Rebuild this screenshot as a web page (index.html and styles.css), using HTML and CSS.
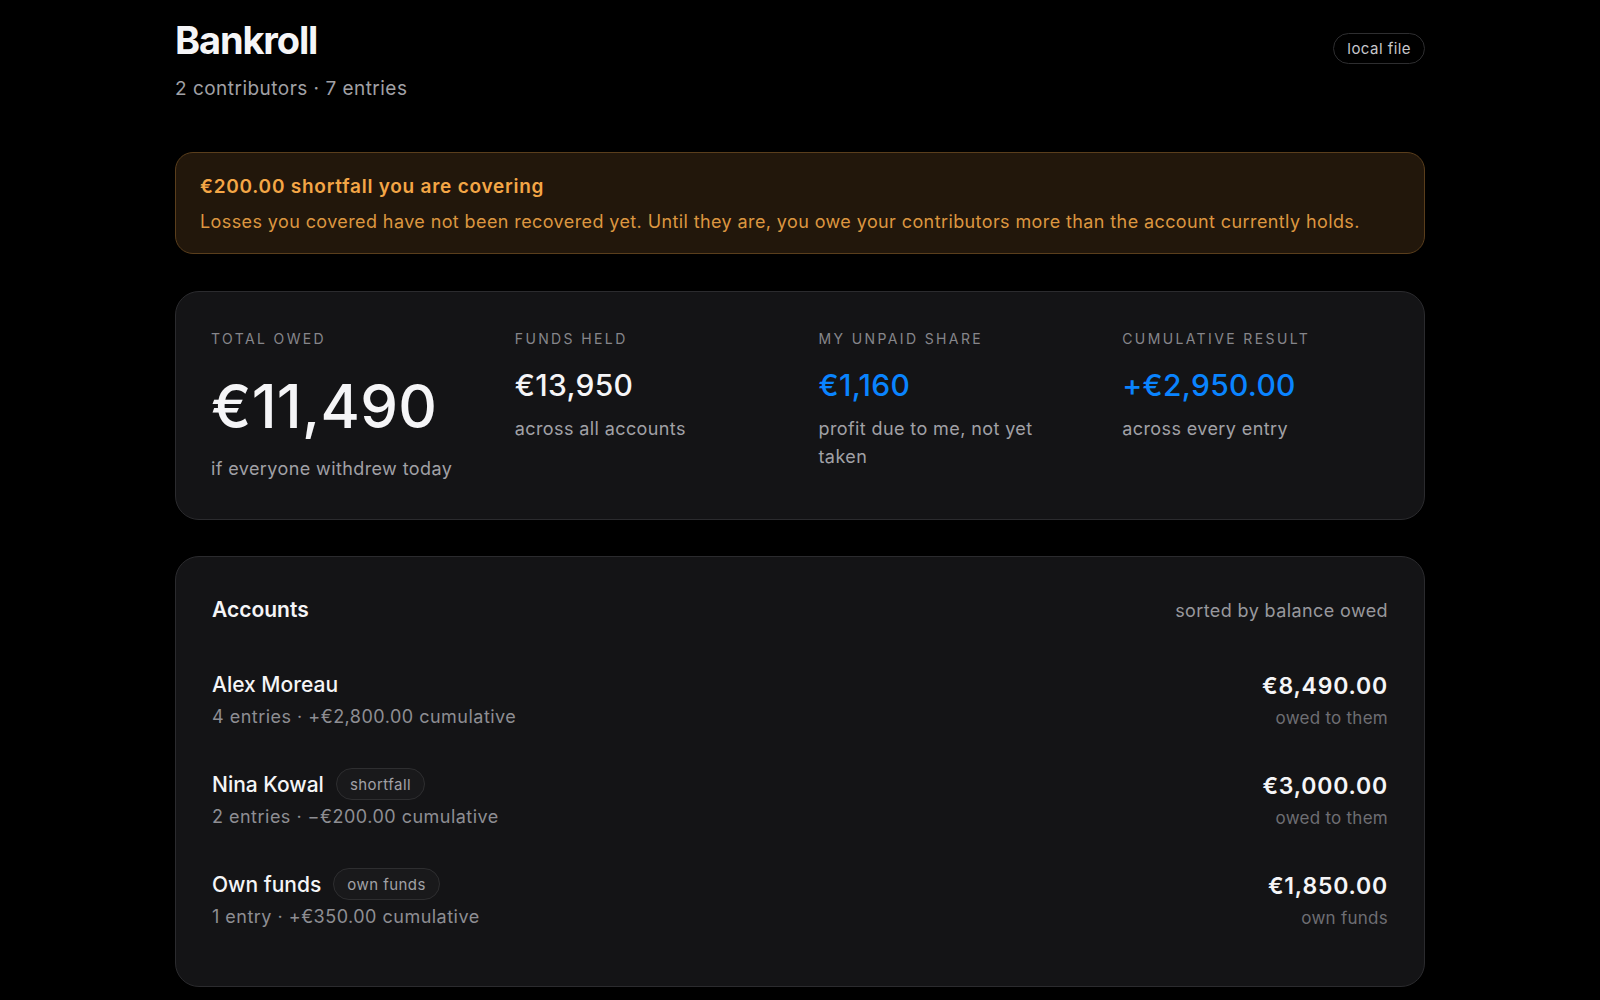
FILE: index.html
```html
<!DOCTYPE html>
<html lang="en">
<head>
    <meta charset="UTF-8">
    <meta name="viewport" content="width=device-width, initial-scale=1.0">
    <title>Bankroll</title>
    <link rel="stylesheet" href="styles.css">
</head>
<body>
    <div class="page">
        <header class="page-header">
            <div>
                <h1>Bankroll</h1>
                <p class="subtitle">2 contributors · 7 entries</p>
            </div>
            <span class="pill">local file</span>
        </header>

        <!-- shortfall warning -->
        <div class="alert">
            <div class="alert-title">€200.00 shortfall you are covering</div>
            <div class="alert-body">Losses you covered have not been recovered yet. Until they are, you owe your contributors more than the account currently holds.</div>
        </div>

        <!-- summary numbers -->
        <section class="card stats">
            <div class="stat">
                <div class="stat-label">Total owed</div>
                <div class="stat-value big">€11,490</div>
                <div class="stat-sub">if everyone withdrew today</div>
            </div>
            <div class="stat">
                <div class="stat-label">Funds held</div>
                <div class="stat-value">€13,950</div>
                <div class="stat-sub">across all accounts</div>
            </div>
            <div class="stat">
                <div class="stat-label">My unpaid share</div>
                <div class="stat-value blue">€1,160</div>
                <div class="stat-sub">profit due to me, not yet taken</div>
            </div>
            <div class="stat">
                <div class="stat-label">Cumulative result</div>
                <div class="stat-value blue">+€2,950.00</div>
                <div class="stat-sub">across every entry</div>
            </div>
        </section>

        <!-- account list -->
        <section class="card accounts">
            <div class="accounts-head">
                <h2>Accounts</h2>
                <span class="muted">sorted by balance owed</span>
            </div>

            <div class="account">
                <div>
                    <div class="account-name">Alex Moreau</div>
                    <div class="account-meta">4 entries · +€2,800.00 cumulative</div>
                </div>
                <div class="account-balance">
                    <div class="amount">€8,490.00</div>
                    <div class="amount-note">owed to them</div>
                </div>
            </div>

            <div class="account">
                <div>
                    <div class="account-name">Nina Kowal <span class="pill tag">shortfall</span></div>
                    <div class="account-meta">2 entries · −€200.00 cumulative</div>
                </div>
                <div class="account-balance">
                    <div class="amount">€3,000.00</div>
                    <div class="amount-note">owed to them</div>
                </div>
            </div>

            <div class="account">
                <div>
                    <div class="account-name">Own funds <span class="pill tag">own funds</span></div>
                    <div class="account-meta">1 entry · +€350.00 cumulative</div>
                </div>
                <div class="account-balance">
                    <div class="amount">€1,850.00</div>
                    <div class="amount-note">own funds</div>
                </div>
            </div>
        </section>
    </div>
</body>
</html>
```

FILE: styles.css
```css
body {
    margin: 0;
    background-color: #000;
    color: #f5f5f7;
    font-family: Inter, "Noto Sans", Arial, sans-serif;
}
.page {
    max-width: 1250px;
    margin: 0 auto;
    padding-top: 18px;
}
.page-header {
    display: flex;
    justify-content: space-between;
    align-items: flex-start;
    margin-bottom: 50px;
}
h1 {
    margin: 0 0 12px;
    font-size: 38px;
    line-height: 1.2;
    font-weight: 700;
    letter-spacing: -0.03em;
}
.subtitle {
    margin: 0;
    font-size: 19px;
    line-height: 26px;
    letter-spacing: 0.025em;
    color: #a1a1a6;
}
.pill {
    display: inline-flex;
    align-items: center;
    height: 31px;
    padding: 0 13px;
    border: 1px solid #2e2e30;
    border-radius: 16px;
    font-size: 15px;
    font-weight: 400;
    letter-spacing: 0.03em;
    color: #c7c7cc;
    box-sizing: border-box;
}
.page-header .pill {
    margin-top: 15px;
}

/* warning banner */
.alert {
    padding: 21px 24px 19px;
    margin-bottom: 37px;
    background-color: #22170b;
    border: 1px solid #5a3e1c;
    border-radius: 18px;
}
.alert-title {
    font-size: 19px;
    line-height: 25px;
    font-weight: 600;
    letter-spacing: 0.04em;
    color: #f4a646;
    margin-bottom: 10px;
}
.alert-body {
    font-size: 18px;
    line-height: 25px;
    letter-spacing: 0.022em;
    color: #dc9640;
}

.card {
    background-color: #141416;
    border: 1px solid #2b2b2e;
    border-radius: 24px;
}

/* summary grid */
.stats {
    display: grid;
    grid-template-columns: repeat(4, 1fr);
    gap: 38px;
    padding: 37px 36px 36px 35px;
    margin-bottom: 36px;
}
.stat-label {
    font-size: 14px;
    line-height: 20px;
    letter-spacing: 0.17em;
    text-transform: uppercase;
    color: #86868b;
}
.stat-value {
    margin: 18px 0 12px;
    font-size: 30px;
    line-height: 36px;
    font-weight: 500;
    letter-spacing: 0.01em;
}
.stat-value.big {
    margin: 24px 0 16px;
    font-size: 60px;
    line-height: 66px;
    letter-spacing: 0.005em;
}
.stat-value.blue {
    color: #0a84ff;
}
.stat-sub {
    font-size: 18px;
    line-height: 28px;
    letter-spacing: 0.022em;
    color: #a1a1a6;
}

/* accounts list */
.accounts {
    padding: 39px 36px 35px;
}
.accounts-head {
    display: flex;
    justify-content: space-between;
    align-items: baseline;
    margin-bottom: 28px;
}
h2 {
    margin: 0;
    font-size: 21px;
    line-height: 27px;
    font-weight: 600;
}
.muted {
    font-size: 18px;
    letter-spacing: 0.022em;
    color: #98989d;
}
.account {
    display: flex;
    justify-content: space-between;
    align-items: flex-start;
    padding: 20px 0;
}
.account-name {
    display: flex;
    align-items: center;
    gap: 12px;
    height: 27px;
    font-size: 21px;
    font-weight: 500;
    margin-bottom: 5px;
}
.tag {
    height: 32px;
    padding: 0 13px;
    background-color: #19191b;
    color: #a1a1a6;
}
.account-meta {
    font-size: 18px;
    line-height: 28px;
    letter-spacing: 0.027em;
    color: #8e8e93;
}
.account-balance {
    text-align: right;
}
.amount {
    font-size: 23px;
    line-height: 30px;
    font-weight: 600;
    letter-spacing: 0.035em;
    margin-bottom: 4px;
}
.amount-note {
    font-size: 17px;
    line-height: 26px;
    letter-spacing: 0.015em;
    color: #6e6e73;
}
```
